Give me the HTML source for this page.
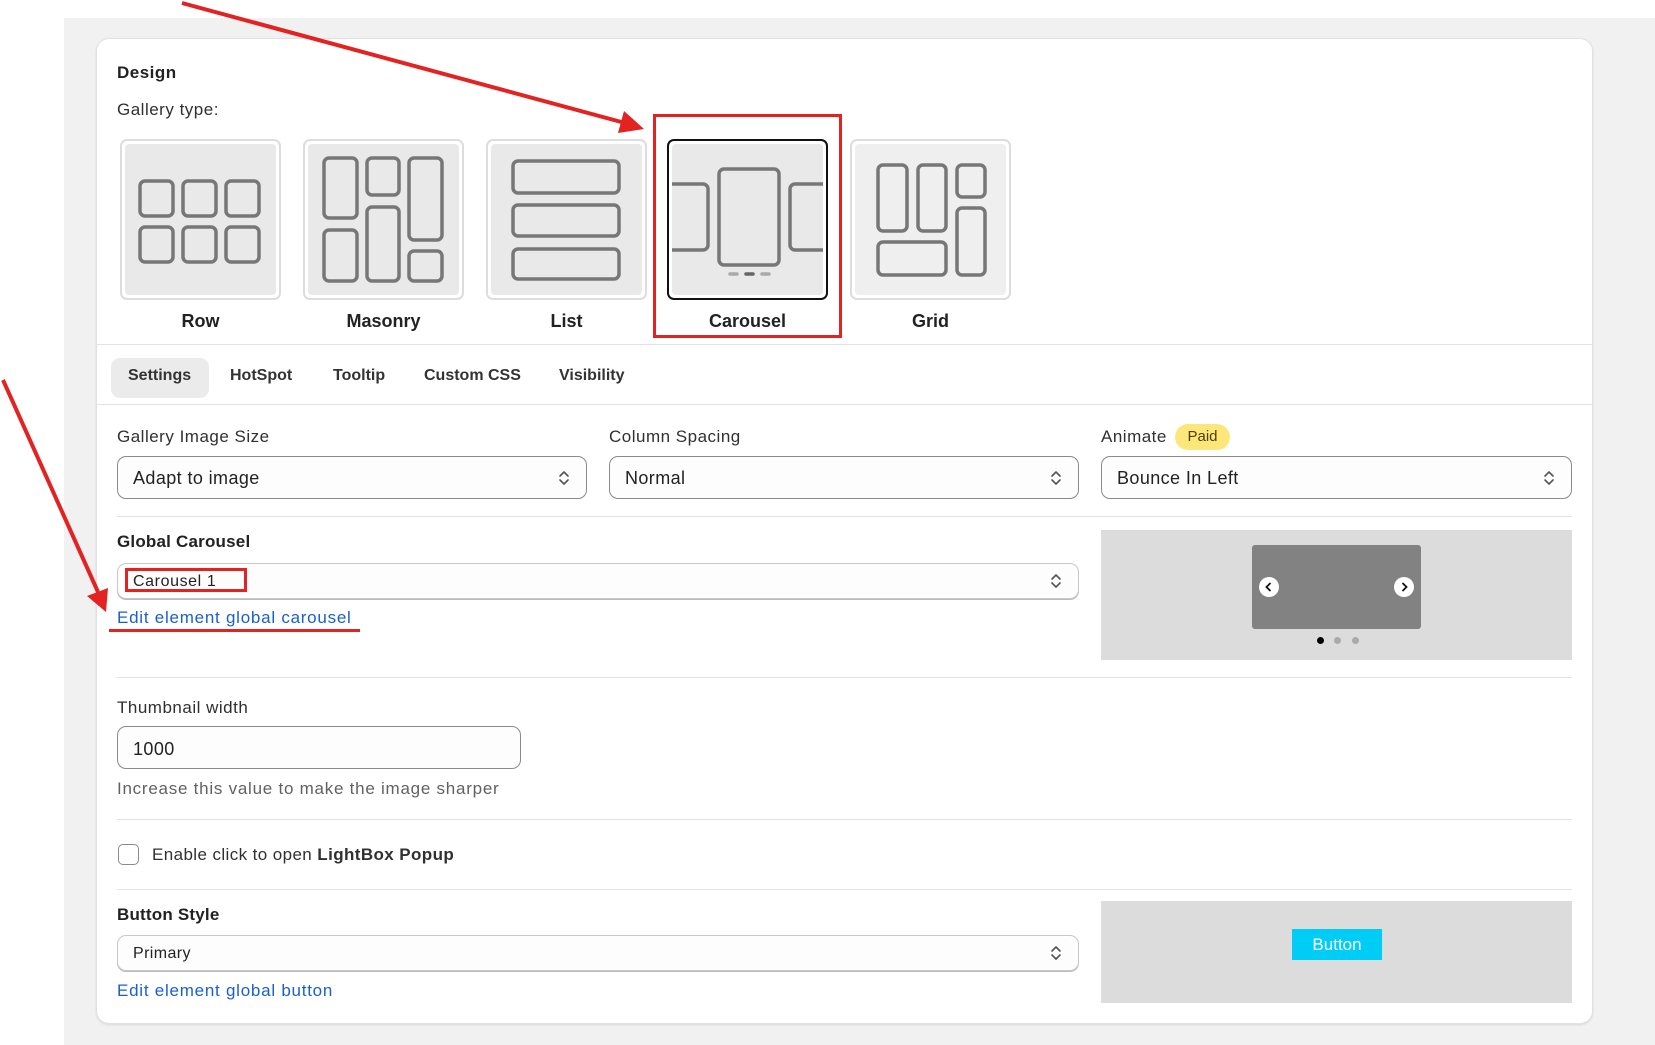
<!DOCTYPE html>
<html><head><meta charset="utf-8"><style>
*{margin:0;padding:0;box-sizing:border-box}
body{width:1655px;height:1045px;background:#fff;font-family:"Liberation Sans",sans-serif;color:#303030;position:relative;overflow:hidden}
.a{position:absolute}
.t{position:absolute;white-space:nowrap;line-height:1;letter-spacing:0.5px}
.tile{position:absolute;width:161px;height:161px;border:2px solid #ddd;border-radius:7px;background:#fff;padding:3px}
.tile .in{width:100%;height:100%;background:#e9e9e9;border-radius:4px;position:relative}
.tile svg{position:absolute;left:-5px;top:-5px}
.lbl{position:absolute;font-weight:bold;font-size:18px;color:#222;text-align:center;width:161px}
.hr{position:absolute;height:1px;background:#e3e3e3}
.sel{position:absolute;border:1px solid #8a8a8a;border-radius:9px;background:#fdfdfd}
.sel span{position:absolute;left:15px;font-size:18px;color:#222;letter-spacing:0.4px}
.chev{position:absolute;right:14px;top:50%;margin-top:-9px}
.tab{position:absolute;top:367px;font-size:16px;font-weight:bold;color:#333}
</style></head><body>
<div class="a" style="left:64px;top:18px;width:1591px;height:1027px;background:#f1f1f1"></div>
<div class="a" style="left:96px;top:38px;width:1497px;height:986px;background:#fff;border-radius:13px;border:1px solid #e1e1e1;box-shadow:0 1px 2px rgba(0,0,0,.1)"></div>

<div class="t" style="left:117px;top:64px;font-size:17px;font-weight:bold;color:#222">Design</div>
<div class="t" style="left:117px;top:101px;font-size:17px">Gallery type:</div>

<!-- Row -->
<div class="tile" style="left:120px;top:139px"><div class="in"><svg width="161" height="161" fill="none" stroke="#777" stroke-width="3.5">
<rect x="20" y="42" width="33" height="35" rx="5"/><rect x="63" y="42" width="33" height="35" rx="5"/><rect x="106" y="42" width="33" height="35" rx="5"/>
<rect x="20" y="88" width="33" height="35" rx="5"/><rect x="63" y="88" width="33" height="35" rx="5"/><rect x="106" y="88" width="33" height="35" rx="5"/></svg></div></div>
<div class="lbl" style="left:120px;top:311px">Row</div>
<!-- Masonry -->
<div class="tile" style="left:303px;top:139px"><div class="in"><svg width="161" height="161" fill="none" stroke="#777" stroke-width="3.5">
<rect x="21" y="19" width="33" height="60" rx="5"/><rect x="21" y="91" width="33" height="51" rx="5"/>
<rect x="64" y="19" width="32" height="37" rx="5"/><rect x="64" y="68" width="32" height="74" rx="5"/>
<rect x="106" y="19" width="33" height="82" rx="5"/><rect x="106" y="112" width="33" height="30" rx="5"/></svg></div></div>
<div class="lbl" style="left:303px;top:311px">Masonry</div>
<!-- List -->
<div class="tile" style="left:486px;top:139px"><div class="in"><svg width="161" height="161" fill="none" stroke="#777" stroke-width="3.5">
<rect x="27" y="22" width="106" height="32" rx="5"/><rect x="27" y="66" width="106" height="31" rx="5"/><rect x="27" y="110" width="106" height="30" rx="5"/></svg></div></div>
<div class="lbl" style="left:486px;top:311px">List</div>
<!-- Carousel -->
<div class="tile" style="left:667px;top:139px;border-color:#111"><div class="in" style="overflow:hidden"><svg width="161" height="161" fill="none" stroke="#777" stroke-width="3.5">
<rect x="52" y="30" width="60" height="96" rx="5"/>
<path d="M5 45 H36 a5 5 0 0 1 5 5 V106 a5 5 0 0 1 -5 5 H5"/>
<path d="M158 45 H128 a5 5 0 0 0 -5 5 V106 a5 5 0 0 0 5 5 H158"/>
<g stroke-width="3.5" stroke-linecap="round"><path d="M63 135h7" stroke="#aaa"/><path d="M79 135h7" stroke="#666"/><path d="M95 135h7" stroke="#aaa"/></g></svg></div></div>
<div class="lbl" style="left:667px;top:311px">Carousel</div>
<!-- Grid -->
<div class="tile" style="left:850px;top:139px"><div class="in" style="background:#efefef"><svg width="161" height="161" fill="none" stroke="#777" stroke-width="3.5">
<rect x="28" y="26" width="29" height="66" rx="5"/><rect x="68" y="26" width="28" height="66" rx="5"/>
<rect x="107" y="26" width="28" height="32" rx="5"/><rect x="107" y="69" width="28" height="67" rx="5"/>
<rect x="28" y="103" width="68" height="33" rx="5"/></svg></div></div>
<div class="lbl" style="left:850px;top:311px">Grid</div>

<div class="a" style="left:653px;top:114px;width:189px;height:224px;border:3px solid #e32222"></div>

<div class="hr" style="left:97px;top:344px;width:1495px"></div>
<div class="a" style="left:111px;top:358px;width:98px;height:40px;background:#ebebeb;border-radius:9px"></div>
<div class="tab" style="left:128px">Settings</div>
<div class="tab" style="left:230px">HotSpot</div>
<div class="tab" style="left:333px">Tooltip</div>
<div class="tab" style="left:424px">Custom CSS</div>
<div class="tab" style="left:559px">Visibility</div>
<div class="hr" style="left:97px;top:404px;width:1495px"></div>

<div class="t" style="left:117px;top:428px;font-size:17px">Gallery Image Size</div>
<div class="t" style="left:609px;top:428px;font-size:17px">Column Spacing</div>
<div class="t" style="left:1101px;top:428px;font-size:17px">Animate</div>
<div class="a" style="left:1175px;top:424px;width:55px;height:26px;background:#fde77a;border-radius:13px;font-size:15px;color:#4a3f00;text-align:center;line-height:26px">Paid</div>

<svg width="0" height="0" style="position:absolute"><defs><g id="ch"><path d="M4 7 L8 3 L12 7 M4 11 L8 15 L12 11" fill="none" stroke="#555" stroke-width="1.6" stroke-linecap="round" stroke-linejoin="round"/></g></defs></svg>

<div class="sel" style="left:117px;top:456px;width:470px;height:43px"><span style="top:11px">Adapt to image</span><svg class="chev" width="16" height="18"><use href="#ch"/></svg></div>
<div class="sel" style="left:609px;top:456px;width:470px;height:43px"><span style="top:11px">Normal</span><svg class="chev" width="16" height="18"><use href="#ch"/></svg></div>
<div class="sel" style="left:1101px;top:456px;width:471px;height:43px"><span style="top:11px">Bounce In Left</span><svg class="chev" width="16" height="18"><use href="#ch"/></svg></div>

<div class="hr" style="left:117px;top:516px;width:1455px"></div>

<div class="t" style="left:117px;top:533px;font-size:17px;font-weight:bold;color:#222;letter-spacing:0.2px">Global Carousel</div>
<div class="sel" style="left:117px;top:563px;width:962px;height:36px;border-color:#c8c8c8;box-shadow:0 1px 0 #bbb"><span style="top:9px;font-size:16px;letter-spacing:0.6px">Carousel 1</span><svg class="chev" width="16" height="18"><use href="#ch"/></svg></div>
<div class="a" style="left:125px;top:568px;width:122px;height:24px;border:3px solid #e32222"></div>
<div class="t" style="left:117px;top:609px;font-size:17px;color:#1a5fd0;letter-spacing:0.75px">Edit element global carousel</div>
<div class="a" style="left:109px;top:629px;width:251px;height:3px;background:#e32222"></div>

<div class="a" style="left:1101px;top:530px;width:471px;height:130px;background:#dcdcdc">
 <div class="a" style="left:151px;top:15px;width:169px;height:84px;background:#828282;border-radius:3px">
  <div class="a" style="left:7px;top:32px;width:20px;height:20px;border-radius:50%;background:#fff"><svg width="20" height="20"><path d="M11.5 6 L7.5 10 L11.5 14" stroke="#111" stroke-width="1.8" fill="none"/></svg></div>
  <div class="a" style="left:142px;top:32px;width:20px;height:20px;border-radius:50%;background:#fff"><svg width="20" height="20"><path d="M8.5 6 L12.5 10 L8.5 14" stroke="#111" stroke-width="1.8" fill="none"/></svg></div>
 </div>
 <div class="a" style="left:216px;top:107px;width:7px;height:7px;border-radius:50%;background:#000"></div>
 <div class="a" style="left:233px;top:107px;width:7px;height:7px;border-radius:50%;background:#aaa"></div>
 <div class="a" style="left:251px;top:107px;width:7px;height:7px;border-radius:50%;background:#aaa"></div>
</div>

<div class="hr" style="left:117px;top:677px;width:1455px"></div>
<div class="t" style="left:117px;top:699px;font-size:17px">Thumbnail width</div>
<div class="sel" style="left:117px;top:726px;width:404px;height:43px"><span style="top:12px">1000</span></div>
<div class="t" style="left:117px;top:780px;font-size:17px;color:#616161;letter-spacing:0.75px">Increase this value to make the image sharper</div>

<div class="hr" style="left:117px;top:819px;width:1455px"></div>
<div class="a" style="left:118px;top:844px;width:21px;height:21px;border:1.5px solid #8a8a8a;border-radius:5px;background:#fff"></div>
<div class="t" style="left:152px;top:846px;font-size:17px;letter-spacing:0.4px">Enable click to open <b>LightBox Popup</b></div>

<div class="hr" style="left:117px;top:889px;width:1455px"></div>
<div class="t" style="left:117px;top:906px;font-size:17px;font-weight:bold;color:#222;letter-spacing:0.2px">Button Style</div>
<div class="sel" style="left:117px;top:935px;width:962px;height:36px;border-color:#c8c8c8;box-shadow:0 1px 0 #bbb"><span style="top:9px;font-size:16px">Primary</span><svg class="chev" width="16" height="18"><use href="#ch"/></svg></div>
<div class="t" style="left:117px;top:982px;font-size:17px;color:#1a5fd0;letter-spacing:0.75px">Edit element global button</div>

<div class="a" style="left:1101px;top:901px;width:471px;height:102px;background:#dcdcdc">
 <div class="a" style="left:191px;top:28px;width:90px;height:31px;background:#00cdf5;color:#fff;font-size:17px;text-align:center;line-height:31px">Button</div>
</div>

<svg class="a" style="left:0;top:0" width="1655" height="1045">
<line x1="182" y1="3" x2="625" y2="123" stroke="#e32222" stroke-width="4"/>
<polygon points="644,129 618,133 624,111" fill="#e32222"/>
<line x1="3" y1="380" x2="98" y2="592" stroke="#e32222" stroke-width="4"/>
<polygon points="106,612 87,596 108,588" fill="#e32222"/>
</svg>
</body></html>
